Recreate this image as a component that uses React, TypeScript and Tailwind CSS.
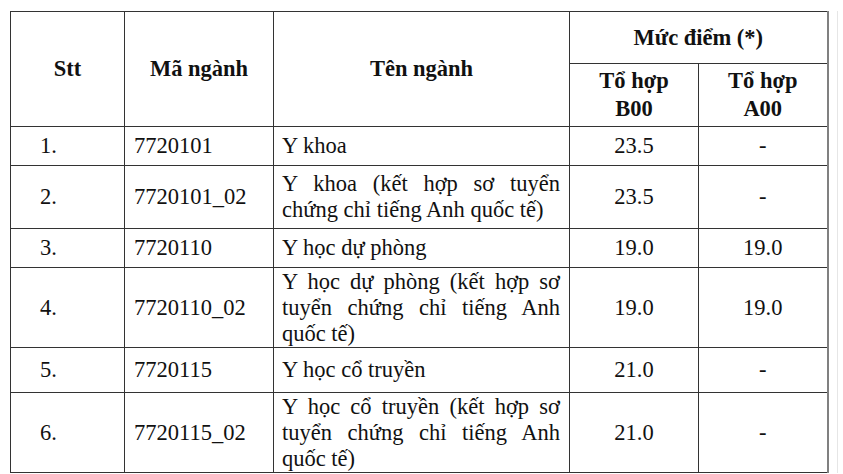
import React from 'react';

interface Row {
  stt: string;
  ma: string;
  ten: string[];
  b00: string;
  a00: string;
  h: string;
}

// each line of the justified name is its own block so the breaks match the scan
const rows: Row[] = [
  { stt: '1.', ma: '7720101', ten: ['Y khoa'], b00: '23.5', a00: '-', h: 'h-[39px]' },
  {
    stt: '2.',
    ma: '7720101_02',
    ten: ['Y khoa (kết hợp sơ tuyển', 'chứng chỉ tiếng Anh quốc tế)'],
    b00: '23.5',
    a00: '-',
    h: 'h-[63px]',
  },
  { stt: '3.', ma: '7720110', ten: ['Y học dự phòng'], b00: '19.0', a00: '19.0', h: 'h-[39px]' },
  {
    stt: '4.',
    ma: '7720110_02',
    ten: ['Y học dự phòng (kết hợp sơ', 'tuyển chứng chỉ tiếng Anh', 'quốc tế)'],
    b00: '19.0',
    a00: '19.0',
    h: 'h-[80px]',
  },
  { stt: '5.', ma: '7720115', ten: ['Y học cổ truyền'], b00: '21.0', a00: '-', h: 'h-[45px]' },
  {
    stt: '6.',
    ma: '7720115_02',
    ten: ['Y học cổ truyền (kết hợp sơ', 'tuyển chứng chỉ tiếng Anh', 'quốc tế)'],
    b00: '21.0',
    a00: '-',
    h: 'h-[80px]',
  },
];

const cell = 'border border-[#333]';

export default function App() {
  return (
    <div className="w-[843px] h-[474px] overflow-hidden bg-white text-[#111] [font-family:'Liberation_Serif',serif] text-[22.5px] leading-[26px]">
      <div className="flex pt-[11px] pl-[10px]">
        <table className="table-fixed border-collapse w-[817px]">
          <colgroup>
            <col className="w-[114px]" />
            <col className="w-[149px]" />
            <col className="w-[296px]" />
            <col className="w-[129px]" />
            <col className="w-[129px]" />
          </colgroup>
          <thead>
            <tr className="h-[52px]">
              <th rowSpan={2} className={`${cell} font-bold text-center align-middle`}>
                Stt
              </th>
              <th rowSpan={2} className={`${cell} font-bold text-center align-middle`}>
                Mã ngành
              </th>
              <th rowSpan={2} className={`${cell} font-bold text-center align-middle`}>
                Tên ngành
              </th>
              <th colSpan={2} className={`${cell} border-r-2 border-r-[#808080] font-bold text-center align-middle`}>
                Mức điểm (*)
              </th>
            </tr>
            <tr className="h-[63px]">
              <th className={`${cell} font-bold text-center align-middle leading-[28px]`}>
                Tổ hợp
                <br />
                B00
              </th>
              <th className={`${cell} border-r-2 border-r-[#808080] font-bold text-center align-middle leading-[28px]`}>
                Tổ hợp
                <br />
                A00
              </th>
            </tr>
          </thead>
          <tbody>
            {rows.map((r) => (
              <tr key={r.stt} className={r.h}>
                <td className={`${cell} pl-[29px] align-middle`}>{r.stt}</td>
                <td className={`${cell} pl-[9px] align-middle`}>{r.ma}</td>
                <td className={`${cell} pl-[8px] pr-[9px] align-middle`}>
                  {r.ten.map((line, i) => (
                    <div
                      key={i}
                      className={i < r.ten.length - 1 ? 'text-justify [text-align-last:justify] whitespace-nowrap' : 'whitespace-nowrap'}
                    >
                      {line}
                    </div>
                  ))}
                </td>
                <td className={`${cell} text-center align-middle`}>{r.b00}</td>
                <td className={`${cell} border-r-2 border-r-[#808080] text-center align-middle`}>{r.a00}</td>
              </tr>
            ))}
          </tbody>
        </table>
        <div className="w-[8px] shrink-0" />
        <div className="w-px shrink-0 self-stretch bg-[#e6e6e6]" />
      </div>
    </div>
  );
}
